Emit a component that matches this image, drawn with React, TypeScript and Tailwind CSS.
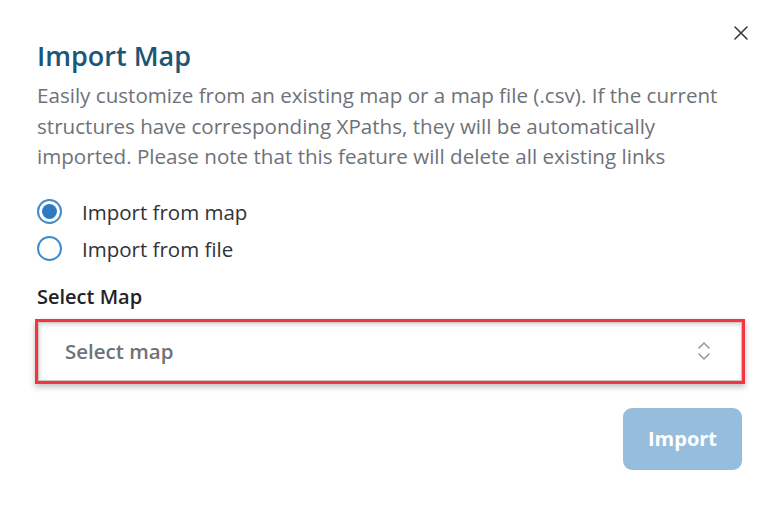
import { useState } from "react";

export default function App() {
  const [source, setSource] = useState<"map" | "file">("map");

  return (
    <main className="min-h-screen w-full bg-white">
      <div className="relative h-[525px] w-[778px] bg-white px-[37px] pt-[38px] font-['Open_Sans',sans-serif]">
        <button
          type="button"
          aria-label="Close"
          className="absolute right-[29px] top-[25px] flex h-[16px] w-[16px] items-center justify-center text-[#3a3a3a]"
        >
          <svg viewBox="0 0 16 16" width="16" height="16" fill="none" stroke="currentColor" strokeWidth="1.6" strokeLinecap="round">
            <path d="M2 2L14 14M14 2L2 14" />
          </svg>
        </button>

        <h1 className="text-[27px] leading-[36px] font-semibold text-[#1d5577]">Import Map</h1>
        <p className="mt-[6px] w-[700px] text-[20.6px] leading-[30.5px] text-[#6e7278]">
          Easily customize from an existing map or a map file (.csv). If the current structures have corresponding
          XPaths, they will be automatically imported. Please note that this feature will delete all existing links
        </p>

        <div className="mt-[27px] flex flex-col gap-[11px]">
          <label className="flex cursor-pointer items-center gap-[20px]" onClick={() => setSource("map")}>
            <span className="flex h-[25px] w-[25px] items-center justify-center rounded-full border-[2px] border-[#3f8bc9]">
              {source === "map" ? <span className="h-[15px] w-[15px] rounded-full bg-[#2e7ac0]" /> : null}
            </span>
            <span className="text-[20.5px] leading-[26px] text-[#2f3236]">Import from map</span>
          </label>
          <label className="flex cursor-pointer items-center gap-[20px]" onClick={() => setSource("file")}>
            <span className="flex h-[25px] w-[25px] items-center justify-center rounded-full border-[2px] border-[#3f8bc9]">
              {source === "file" ? <span className="h-[15px] w-[15px] rounded-full bg-[#2e7ac0]" /> : null}
            </span>
            <span className="text-[20.5px] leading-[26px] text-[#2f3236]">Import from file</span>
          </label>
        </div>

        <div className="mt-[22px] text-[20px] leading-[26px] font-semibold text-[#1f2226]">Select Map</div>

        <div className="mt-[9px] -ml-[2px] w-[710px] border-[3px] border-[#f2353f] shadow-[0_3px_6px_rgba(0,0,0,0.25)]">
          <div className="flex h-[59px] items-center justify-between border border-[#c9c9c9] bg-white pl-[26px] pr-[30px] shadow-[inset_1px_2px_4px_rgba(0,0,0,0.15)]">
            <span className="text-[20.5px] font-semibold text-[#6f7278]">Select map</span>
            <svg viewBox="0 0 14 20" width="14" height="20" fill="none" stroke="#9a9a9a" strokeWidth="1.6" strokeLinecap="round" strokeLinejoin="round">
              <path d="M2 7L7 2L12 7" />
              <path d="M2 13L7 18L12 13" />
            </svg>
          </div>
        </div>

        <div className="mt-[24px] flex justify-end">
          <button
            type="button"
            disabled
            className="mr-[-1px] h-[62px] w-[119px] rounded-[9px] bg-[#97bddd] text-[20px] font-bold text-white"
          >
            Import
          </button>
        </div>
      </div>
    </main>
  );
}
